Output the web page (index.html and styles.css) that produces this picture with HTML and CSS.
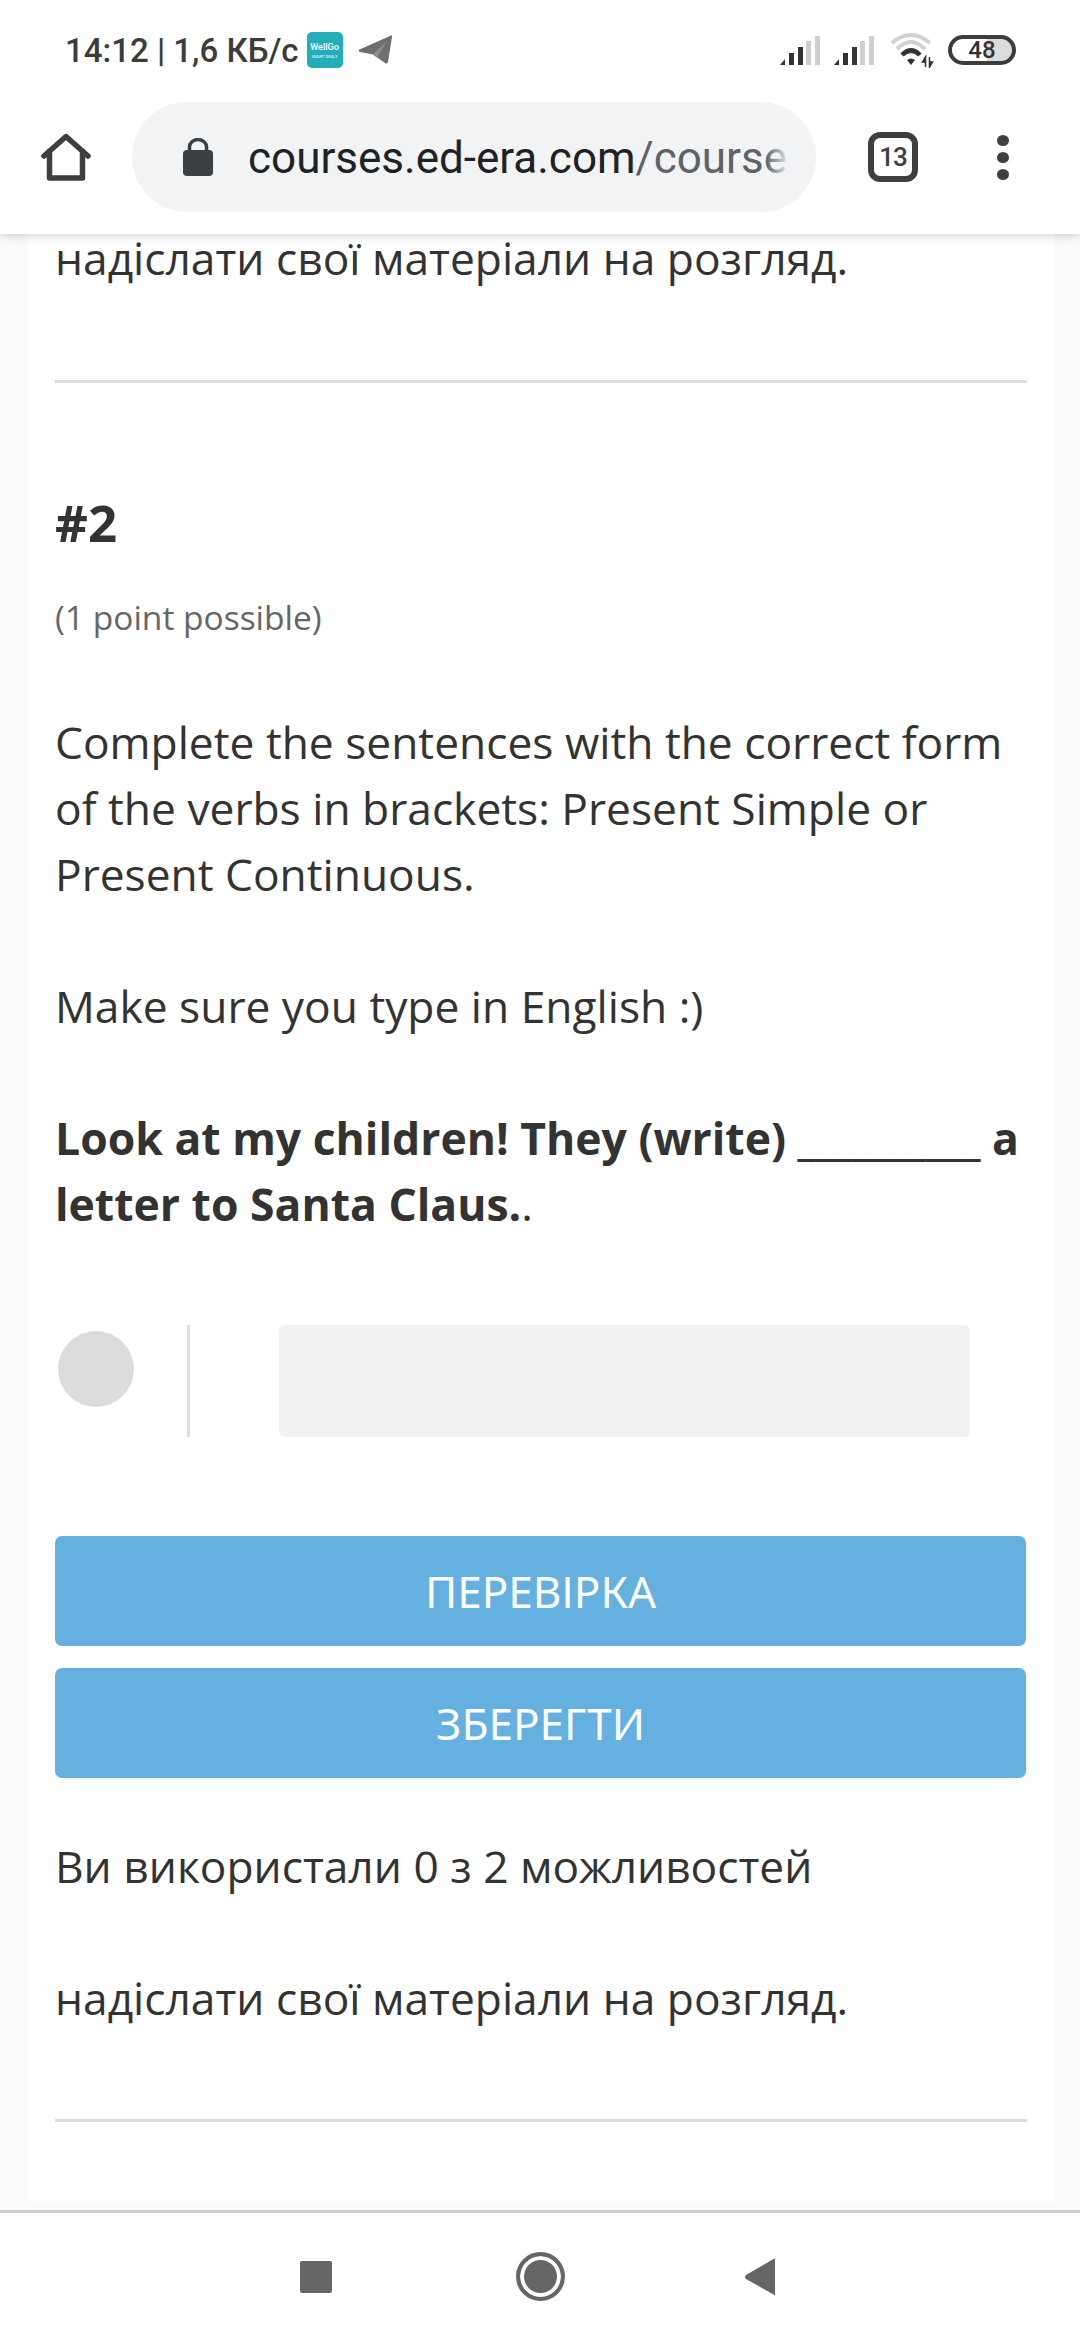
FILE: index.html
```html
<!DOCTYPE html>
<html lang="uk">
<head>
<meta charset="utf-8">
<title>courses.ed-era.com</title>
<link rel="stylesheet" href="styles.css">
</head>
<body>
<div class="phone">
  <header class="chrome">
    <div class="status">
      <div class="status-left">
        <span class="clock">14:12 | 1,6 КБ/с</span>
        <span class="wellgo"><b>WellGo</b><i>SMART DEALS</i></span>
        <svg class="tg" viewBox="0 0 34 30"><path d="M33 .5 Q34.500 0 34 2 L30 27 Q29 29.500 27 28 L15 19.500 L2 17 Q0 16 1.500 14.500 Z" fill="#6e6e6e"/><path d="M15 19.500 L29 6 L19 22.500Z" fill="#8c8c8c"/></svg>
      </div>
      <div class="status-right">
        <span class="signal"><i class="b1"></i><i class="b2"></i><i class="b3"></i><i class="b4 off"></i><i class="b5 off"></i></span>
        <span class="signal"><i class="b1"></i><i class="b2"></i><i class="b3"></i><i class="b4 off"></i><i class="b5 off"></i></span>
        <svg class="wifi" viewBox="0 0 46 36"><path d="M4 11 Q23 -5 42 11" fill="none" stroke="#d2d2d2" stroke-width="4"/><path d="M9 17 Q23 3 37 17" fill="none" stroke="#d2d2d2" stroke-width="4"/><path d="M14 23 Q23 14 32 23" fill="none" stroke="#333" stroke-width="4.500"/><path d="M19 28 Q23 25 27 28 L23 33Z" fill="#333"/><path d="M37.500 25V35M37.500 25L34.500 30H37.500ZM41.500 35V25M41.500 35L44.500 30H41.500Z" fill="#333" stroke="#333" stroke-width="1.500"/></svg>
        <span class="battery"><span class="level">48</span></span>
      </div>
    </div>
    <div class="toolbar">
      <svg class="home" viewBox="0 0 50 50"><path d="M3 24 L25 4.500 L47 24 M8.500 19 V46 H41.500 V19" fill="none" stroke="#3c4043" stroke-width="5.500" stroke-linejoin="round" stroke-linecap="round"/></svg>
      <div class="omnibox">
        <svg class="lock" viewBox="0 0 30 38"><path d="M6.500 14 V9 A8.500 7.500 0 0 1 23.500 9 V14" fill="none" stroke="#3c4043" stroke-width="3.500"/><rect x="0" y="12" width="30" height="26" rx="4" fill="#3c4043"/></svg>
        <div class="url"><span class="host">courses.ed-era.com</span><span class="path">/courses/course-v1:EdEra</span></div>
      </div>
      <span class="tabs">13</span>
      <span class="menu"><i></i><i></i><i></i></span>
    </div>
  </header>

  <main class="page">
    <section class="sheet">
      <p class="para tail">надіслати свої матеріали на розгляд.</p>
      <hr class="rule">
      <h2 class="num">#2</h2>
      <p class="points">(1 point possible)</p>
      <p class="para">Complete the sentences with the correct form of the verbs in brackets: Present Simple or Present Continuous.</p>
      <p class="para gap">Make sure you type in English :)</p>
      <p class="para gap"><strong class="strong">Look at my children! They (write) __________ a letter to Santa Claus.</strong>.</p>
      <div class="answer">
        <span class="dot"></span>
        <span class="bar"></span>
        <span class="field"></span>
      </div>
      <div class="actions">
        <button class="btn">ПЕРЕВІРКА</button>
        <button class="btn">ЗБЕРЕГТИ</button>
      </div>
      <p class="para used">Ви використали 0 з 2 можливостей</p>
      <p class="para gap">надіслати свої матеріали на розгляд.</p>
      <hr class="rule last">
    </section>
  </main>

  <nav class="navbar">
    <span class="nav-stop"></span>
    <span class="nav-home"></span>
    <svg class="nav-back" viewBox="0 0 31 38"><path d="M30 1.500 V36.500 Q30 38 28.500 36.500 L1 21 Q-1 19 1 17 L28.500 1 Q30 0 30 1.500Z" fill="#666"/></svg>
  </nav>
</div>
</body>
</html>
```
FILE: styles.css
```css
* { box-sizing: border-box; }
html, body { margin: 0; padding: 0; }
body { background: #fff; font-family: "Open Sans", "Noto Sans", sans-serif; color: #333; }
.phone { width: 1080px; height: 2340px; display: flex; flex-direction: column; overflow: hidden; }

.chrome { position: relative; z-index: 2; background: #fff; height: 234px; box-shadow: 0 2px 10px rgba(0,0,0,.16); flex: none; }
.status { height: 102px; display: flex; justify-content: space-between; align-items: center; padding: 0 64px 2px 65px; }
.status-left, .status-right { display: flex; align-items: center; }
.clock { font: 500 33px "Roboto", sans-serif; color: #3c3c3c; white-space: nowrap; }
.wellgo { width: 36px; height: 36px; margin-left: 8px; border-radius: 5px; background: #21aeb8; color: #fff; display: flex; flex-direction: column; align-items: center; justify-content: center; line-height: 1; }
.wellgo b { font: 500 9px "Roboto", sans-serif; }
.wellgo i { font: normal 4px "Roboto", sans-serif; margin-top: 2px; white-space: nowrap; }
.tg { width: 34px; height: 30px; margin-left: 15px; }
.signal { display: flex; align-items: flex-end; gap: 3.75px; height: 30px; margin-right: 14px; }
.signal i { width: 5px; background: #333; display: block; }
.signal .off { background: #cfcfcf; }
.b1 { height: 6px; clip-path: polygon(0 100%, 100% 0, 100% 100%); } .b2 { height: 12px; } .b3 { height: 18px; } .b4 { height: 24px; } .b5 { height: 29px; }
.wifi { width: 46px; height: 36px; margin-right: 14px; }
.battery { width: 68px; height: 30px; border: 4px solid #3c3c3c; border-radius: 15px; background: linear-gradient(90deg, #fff 58%, #dcdcdc 58%); display: flex; align-items: center; justify-content: center; }
.level { font: 500 24px "Roboto", sans-serif; color: #333; line-height: 1; }

.toolbar { height: 132px; display: flex; align-items: flex-start; position: relative; }
.home { width: 50px; height: 50px; margin: 30px 0 0 41px; flex: none; }
.omnibox { width: 684px; height: 110px; margin-left: 41px; border-radius: 55px; background: #f1f3f4; display: flex; align-items: center; padding: 0 26px 0 51px; flex: none; }
.lock { width: 30px; height: 38px; flex: none; }
.url { margin-left: 35px; width: 542px; padding-top: 2px; overflow: hidden; white-space: nowrap; font: 400 44px "Roboto", sans-serif; position: relative; }
.url::after { content: ""; position: absolute; top: 0; bottom: 0; right: 0; width: 24px; background: linear-gradient(90deg, rgba(241,243,244,0), #f1f3f4); }
.host { color: #202124; }
.path { color: #5f6368; }
.tabs { width: 50px; height: 50px; margin: 30px 0 0 52px; border: 6px solid #3c4043; border-radius: 12px; font: 500 26px/38px "Roboto", sans-serif; letter-spacing: -1px; color: #3c4043; text-align: center; flex: none; }
.menu { display: flex; flex-direction: column; gap: 6px; margin: 33px 0 0 79px; }
.menu i { display: block; width: 12px; height: 11px; border-radius: 50%; background: #3c4043; }

.page { flex: 1; min-height: 0; background: #fafafa; overflow: hidden; padding: 0 26px 0 28px; }
.sheet { background: #fff; height: 100%; padding: 0 27px; }
.para { margin: 0; font-size: 44.3px; line-height: 66px; }
.strong { font-size: 44.5px; }
.tail { margin-top: -9px; }
.gap { margin-top: 66px; }
.rule { border: 0; height: 3px; background: #dedede; margin: 89px 0 0; }
.num { margin: 108px 0 0; font-size: 51px; line-height: 62px; font-weight: 700; }
.points { margin: 40px 0 0; font-size: 33.5px; line-height: 48px; color: #666; }
.points + .para { margin-top: 68px; }
.answer { display: flex; align-items: flex-start; margin-top: 88px; height: 112px; }
.dot { width: 76px; height: 76px; margin: 6px 0 0 3px; border-radius: 50%; background: #dcdcdc; flex: none; }
.bar { width: 3px; height: 112px; margin-left: 53px; background: #dedede; flex: none; }
.field { width: 691px; height: 112px; margin-left: 89px; border-radius: 6px; background: #f1f1f1; flex: none; }
.actions { display: flex; flex-direction: column; gap: 22px; margin-top: 99px; }
.btn { width: 971px; height: 110px; border: 0; border-radius: 7px; background: #64b0e0; color: #fff; font-family: "Noto Sans", sans-serif; font-size: 44px; padding: 0; }
.used { margin-top: 55px; }
.last { margin-top: 88px; }

.navbar { flex: none; height: 130px; background: #fff; border-top: 3px solid #cfcfcf; position: relative; z-index: 2; display: flex; align-items: center; padding-left: 300px; }
.nav-stop { width: 32px; height: 32px; border-radius: 2px; background: #666; }
.nav-home { width: 49px; height: 49px; margin-left: 184px; border-radius: 50%; background: #666; border: 4px solid #666; box-shadow: inset 0 0 0 4px #fff; }
.nav-back { width: 31px; height: 38px; margin-left: 180px; }
```
